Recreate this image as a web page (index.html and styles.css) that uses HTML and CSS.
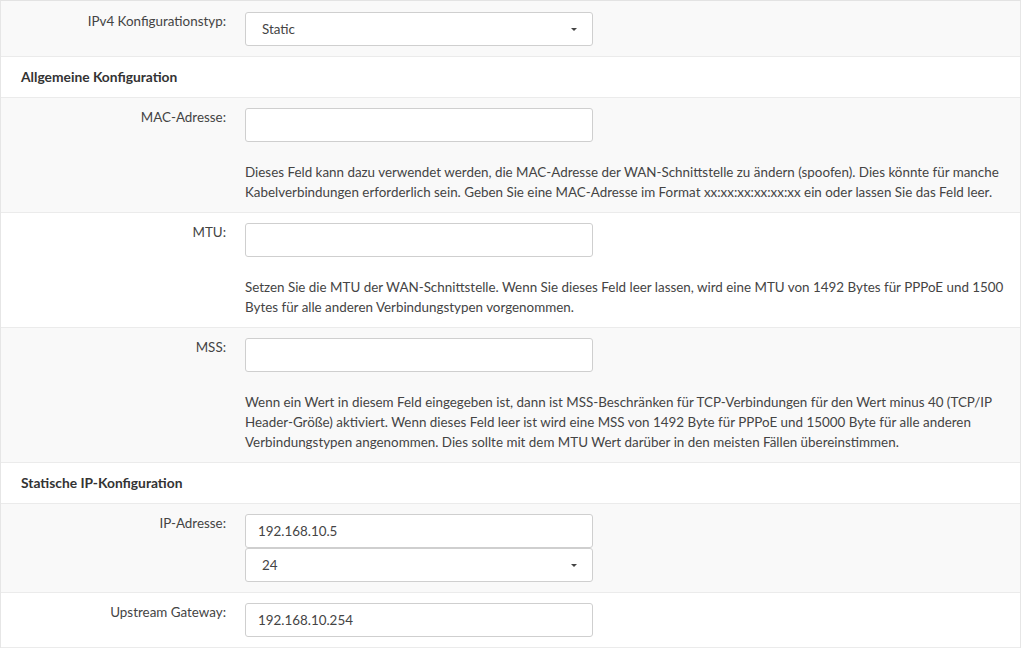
FILE: index.html
```html
<!DOCTYPE html>
<html lang="de">
<head>
<meta charset="utf-8">
<title>WAN</title>
<link rel="stylesheet" href="styles.css">
</head>
<body>
<div class="panel">
  <div class="row striped first">
    <div class="label">IPv4 Konfigurationstyp:</div>
    <div class="value">
      <div class="control select"><span>Static</span><i class="caret"></i></div>
    </div>
  </div>
  <div class="row heading">Allgemeine Konfiguration</div>
  <div class="row striped">
    <div class="label">MAC-Adresse:</div>
    <div class="value">
      <div class="control"></div>
      <p class="help">Dieses Feld kann dazu verwendet werden, die MAC-Adresse der WAN-Schnittstelle zu ändern (spoofen). Dies könnte für manche Kabelverbindungen erforderlich sein. Geben Sie eine MAC-Adresse im Format xx:xx:xx:xx:xx:xx ein oder lassen Sie das Feld leer.</p>
    </div>
  </div>
  <div class="row">
    <div class="label">MTU:</div>
    <div class="value">
      <div class="control"></div>
      <p class="help">Setzen Sie die MTU der WAN-Schnittstelle. Wenn Sie dieses Feld leer lassen, wird eine MTU von 1492 Bytes für PPPoE und 1500 Bytes für alle anderen Verbindungstypen vorgenommen.</p>
    </div>
  </div>
  <div class="row striped">
    <div class="label">MSS:</div>
    <div class="value">
      <div class="control"></div>
      <p class="help">Wenn ein Wert in diesem Feld eingegeben ist, dann ist MSS-Beschränken für TCP-Verbindungen für den Wert minus 40 (TCP/IP Header-Größe) aktiviert. Wenn dieses Feld leer ist wird eine MSS von 1492 Byte für PPPoE und 15000 Byte für alle anderen Verbindungstypen angenommen. Dies sollte mit dem MTU Wert darüber in den meisten Fällen übereinstimmen.</p>
    </div>
  </div>
  <div class="row heading">Statische IP-Konfiguration</div>
  <div class="row striped">
    <div class="label">IP-Adresse:</div>
    <div class="value">
      <div class="control text">192.168.10.5</div>
      <div class="control select"><span>24</span><i class="caret"></i></div>
    </div>
  </div>
  <div class="row">
    <div class="label">Upstream Gateway:</div>
    <div class="value">
      <div class="control text">192.168.10.254</div>
    </div>
  </div>
</div>
</body>
</html>
```
FILE: styles.css
```css
* { box-sizing: border-box; }
html, body { margin: 0; padding: 0; background: #fff; }
body {
  font-family: Lato, "Open Sans", sans-serif;
  font-size: 13.4px;
  line-height: 20px;
  color: #444;
}
.panel {
  width: 1021px;
  border-left: 1px solid #e6e6e6;
  border-right: 1px solid #e6e6e6;
  border-top: 1px solid #e3e3e3;
}
.row {
  display: grid;
  grid-template-columns: 244px 1fr;
  padding: 10px 0;
  border-bottom: 1px solid #ebebeb;
  background: #fff;
}
.row.first { padding-top: 11px; }
.row.striped { background: #f9f9f9; }
.row.heading {
  display: block;
  padding: 10px 20px;
  font-weight: bold;
  font-size: 13.8px;
  color: #333;
}
.label {
  text-align: right;
  padding-right: 19px;
  margin-top: -1px;
  color: #444;
}
.value { padding-right: 16px; }
.control {
  width: 348px;
  height: 34px;
  border: 1px solid #cfcfcf;
  border-radius: 3px;
  background: #fff;
  display: flex;
  align-items: center;
  color: #444;
}
.control.text { padding-left: 12px; }
.control.select { padding-left: 16px; padding-right: 15px; justify-content: space-between; }
.caret {
  width: 0;
  height: 0;
  border-left: 3px solid transparent;
  border-right: 3px solid transparent;
  border-top: 3px solid #444;
}
.help {
  margin: 20px 0 0;
  color: #444;
}
```
